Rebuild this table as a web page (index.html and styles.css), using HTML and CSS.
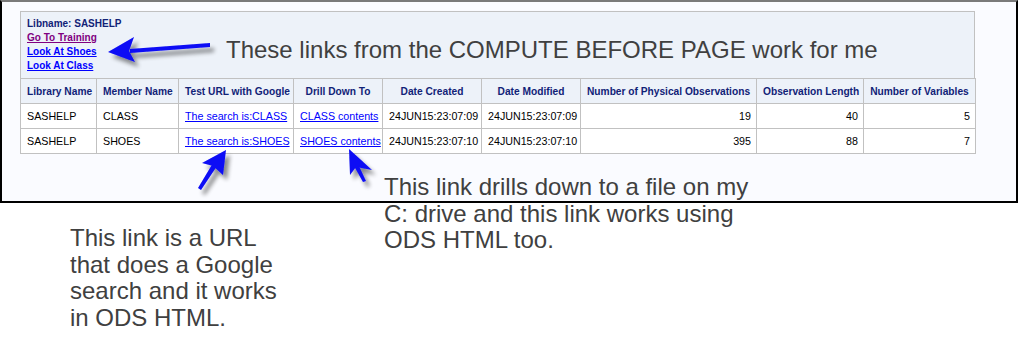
FILE: index.html
```html
<!DOCTYPE html>
<html>
<head>
<meta charset="utf-8">
<link rel="stylesheet" href="styles.css">
</head>
<body>
<div class="frame">
  <div class="report">
    <div class="title">
      <div class="libname">Libname: SASHELP</div>
      <a class="tlink visited" href="#">Go To Training</a>
      <a class="tlink" href="#">Look At Shoes</a>
      <a class="tlink" href="#">Look At Class</a>
    </div>
    <table class="grid">
      <colgroup>
        <col class="c1"><col class="c2"><col class="c3"><col class="c4"><col class="c5"><col class="c6"><col class="c7"><col class="c8"><col class="c9">
      </colgroup>
      <thead>
        <tr>
          <th>Library Name</th>
          <th>Member Name</th>
          <th>Test URL with Google</th>
          <th>Drill Down To</th>
          <th>Date Created</th>
          <th>Date Modified</th>
          <th>Number of Physical Observations</th>
          <th>Observation Length</th>
          <th>Number of Variables</th>
        </tr>
      </thead>
      <tbody>
        <tr>
          <td>SASHELP</td>
          <td>CLASS</td>
          <td><a href="#">The search is:CLASS</a></td>
          <td><a href="#">CLASS contents</a></td>
          <td>24JUN15:23:07:09</td>
          <td>24JUN15:23:07:09</td>
          <td class="num">19</td>
          <td class="num">40</td>
          <td class="num">5</td>
        </tr>
        <tr>
          <td>SASHELP</td>
          <td>SHOES</td>
          <td><a href="#">The search is:SHOES</a></td>
          <td><a href="#">SHOES contents</a></td>
          <td>24JUN15:23:07:10</td>
          <td>24JUN15:23:07:10</td>
          <td class="num">395</td>
          <td class="num">88</td>
          <td class="num">7</td>
        </tr>
      </tbody>
    </table>
  </div>
</div>

<div class="note note-top">These links from the COMPUTE BEFORE PAGE work for me</div>
<div class="note note-drill">This link drills down to a file on my<br>C: drive and this link works using<br>ODS HTML too.</div>
<div class="note note-google">This link is a URL<br>that does a Google<br>search and it works<br>in ODS HTML.</div>

<svg class="arrows" width="1018" height="364" viewBox="0 0 1018 364" xmlns="http://www.w3.org/2000/svg">
  <defs>
    <filter id="sh" x="-30%" y="-30%" width="160%" height="160%">
      <feGaussianBlur in="SourceAlpha" stdDeviation="2.2"/>
      <feOffset dx="4" dy="5" result="b"/>
      <feComponentTransfer><feFuncA type="linear" slope="0.45"/></feComponentTransfer>
      <feMerge><feMergeNode/><feMergeNode in="SourceGraphic"/></feMerge>
    </filter>
  </defs>
  <g fill="#0a0af5" filter="url(#sh)">
    <polygon points="210,43 210,47 130,53 130,49"/>
    <polygon points="108,52 134,37 129,51 135,62"/>
    <polygon points="198,188 201,190 217,166 213,163"/>
    <polygon points="226,150 202,163 213,166 223,175"/>
    <polygon points="363,182 366,181 358,164 354,166"/>
    <polygon points="349,149 350,175 356,167 372,170"/>
  </g>
</svg>
</body>
</html>
```

FILE: styles.css
```css
html, body {
  margin: 0;
  padding: 0;
  background: #ffffff;
}

body {
  width: 1018px;
  height: 364px;
  position: relative;
  overflow: hidden;
  font-family: "Liberation Sans", Arial, sans-serif;
}

.frame {
  box-sizing: border-box;
  width: 1018px;
  height: 203px;
  border: 2px solid #000;
  border-top: 2px solid #7a7a7a;
  background: #fafbff;
  padding: 9px 0 0 18px;
}

.report {
  width: 955px;
}

.title {
  box-sizing: border-box;
  width: 955px;
  height: 67px;
  border: 1px solid #c1c1c1;
  border-bottom: 0;
  background: #edf2f9;
  padding: 5px 6px 5px 6px;
  display: flex;
  flex-direction: column;
  align-items: flex-start;
  font-size: 10px;
  font-weight: bold;
  line-height: 14px;
}

.libname {
  color: #112277;
}

.tlink {
  color: #0000ff;
}

.tlink.visited {
  color: #800080;
}

.grid {
  width: 955px;
  table-layout: fixed;
  border-collapse: collapse;
  border: 1px solid #c1c1c1;
  font-size: 10.7px;
}

.c1 { width: 76px; }
.c2 { width: 82px; }
.c3 { width: 115px; }
.c4 { width: 89px; }
.c5 { width: 99px; }
.c6 { width: 99px; }
.c7 { width: 176px; }
.c8 { width: 107px; }
.c9 { width: 112px; }

.grid tr {
  height: 25px;
}

.grid th,
.grid td {
  border: 1px solid #c1c1c1;
  padding: 0 6px;
  white-space: nowrap;
  overflow: hidden;
}

.grid th {
  background: #edf2f9;
  color: #112277;
  font-weight: bold;
  font-size: 10.2px;
  text-align: center;
}

.grid td {
  background: #ffffff;
  color: #000000;
  text-align: left;
}

.grid td.num {
  text-align: right;
  padding-right: 5px;
}

.grid td a {
  color: #0000ff;
}

.note {
  position: absolute;
  color: #404040;
  font-family: "Liberation Sans", Arial, sans-serif;
  white-space: nowrap;
  font-size: 24px;
  line-height: 26.7px;
}

.note-top {
  left: 226px;
  top: 37px;
}

.note-drill {
  left: 384px;
  top: 174px;
}

.note-google {
  left: 70px;
  top: 225px;
}

.arrows {
  position: absolute;
  left: 0;
  top: 0;
  pointer-events: none;
}
```
